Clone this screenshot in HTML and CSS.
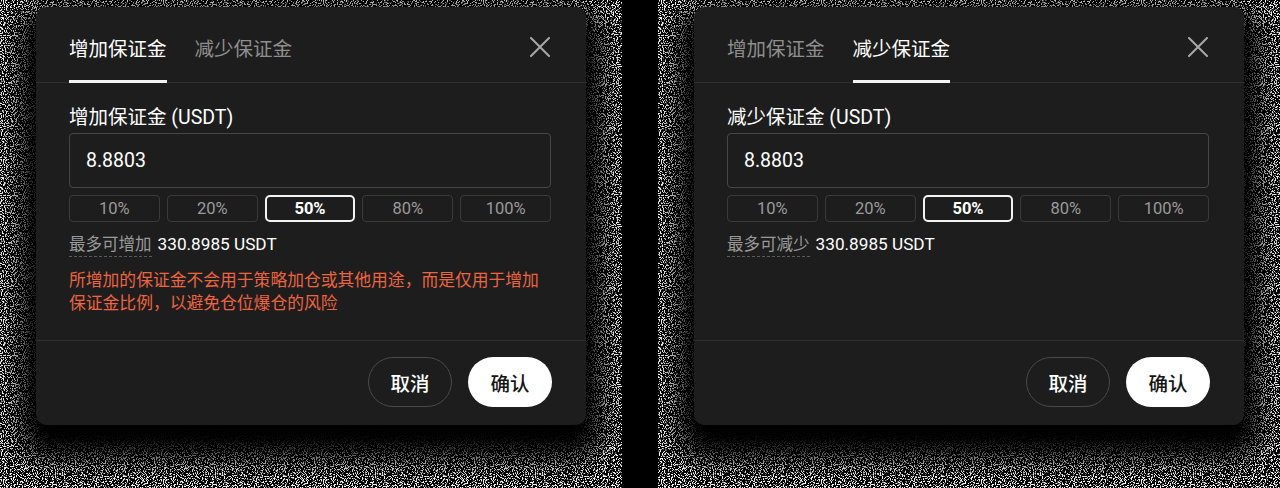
FILE: index.html
```html
<!DOCTYPE html>
<html lang="zh-CN">
<head>
    <meta charset="UTF-8">
    <meta name="viewport" content="width=device-width, initial-scale=1.0">
    <title>调整保证金</title>
    <link rel="stylesheet" href="styles.css">
</head>
<body>
    <!-- Add margin -->
    <div class="shot">
        <div class="modal">
            <div class="modal-head">
                <div class="tabs">
                    <span class="tab active">增加保证金</span>
                    <span class="tab">减少保证金</span>
                </div>
                <span class="close">
                    <svg width="22" height="20" viewBox="0 0 22 20"><path d="M2 1 L20 19 M20 1 L2 19" stroke="#a8a8a8" stroke-width="2" stroke-linecap="round"/></svg>
                </span>
            </div>
            <div class="modal-body">
                <div class="field-label">增加保证金 (USDT)</div>
                <div class="amount">8.8803</div>
                <div class="pcts">
                    <span class="pct">10%</span>
                    <span class="pct">20%</span>
                    <span class="pct on">50%</span>
                    <span class="pct">80%</span>
                    <span class="pct">100%</span>
                </div>
                <div class="max"><span class="max-label">最多可增加</span> <span class="max-value">330.8985 USDT</span></div>
                <p class="warn">所增加的保证金不会用于策略加仓或其他用途，而是仅用于增加保证金比例，以避免仓位爆仓的风险</p>
            </div>
            <div class="modal-foot">
                <button class="btn btn-ghost">取消</button>
                <button class="btn btn-primary">确认</button>
            </div>
        </div>
    </div>

    <!-- Reduce margin -->
    <div class="shot">
        <div class="modal">
            <div class="modal-head">
                <div class="tabs">
                    <span class="tab">增加保证金</span>
                    <span class="tab active">减少保证金</span>
                </div>
                <span class="close">
                    <svg width="22" height="20" viewBox="0 0 22 20"><path d="M2 1 L20 19 M20 1 L2 19" stroke="#a8a8a8" stroke-width="2" stroke-linecap="round"/></svg>
                </span>
            </div>
            <div class="modal-body">
                <div class="field-label">减少保证金 (USDT)</div>
                <div class="amount">8.8803</div>
                <div class="pcts">
                    <span class="pct">10%</span>
                    <span class="pct">20%</span>
                    <span class="pct on">50%</span>
                    <span class="pct">80%</span>
                    <span class="pct">100%</span>
                </div>
                <div class="max"><span class="max-label">最多可减少</span> <span class="max-value">330.8985 USDT</span></div>
            </div>
            <div class="modal-foot">
                <button class="btn btn-ghost">取消</button>
                <button class="btn btn-primary">确认</button>
            </div>
        </div>
    </div>
</body>
</html>
```

FILE: styles.css
```css
body {
    margin: 0;
    height: 488px;
    overflow: hidden;
    display: flex;
    gap: 36px;
    background: #000;
    font-family: Roboto, "Noto Sans CJK SC", sans-serif;
    color: #fff;
}

/* grainy backdrop around each dialog */
.shot {
    flex: none;
    width: 622px;
    height: 488px;
    box-sizing: border-box;
    padding: 7px 36px 0;
    background-color: #000;
    background-image: url("data:image/svg+xml,%3Csvg xmlns='http://www.w3.org/2000/svg' width='160' height='160'%3E%3Cfilter id='n'%3E%3CfeTurbulence type='fractalNoise' baseFrequency='0.9' numOctaves='2' stitchTiles='stitch'/%3E%3CfeColorMatrix values='0 0 0 0 1 0 0 0 0 1 0 0 0 0 1 0 0 0 12 -6.2'/%3E%3C/filter%3E%3Crect width='160' height='160' filter='url(%23n)'/%3E%3C/svg%3E");
}

.modal {
    width: 550px;
    height: 418px;
    background: #1d1d1d;
    border-radius: 10px;
    box-shadow: 0 18px 26px 16px #000;
    display: flex;
    flex-direction: column;
}

.modal-head {
    height: 76px;
    box-sizing: border-box;
    display: flex;
    justify-content: space-between;
    padding: 0 35px 0 33px;
    border-bottom: 1px solid #2f2f2f;
}

.tabs {
    display: flex;
    align-items: flex-end;
    gap: 28px;
}

.tab {
    font-size: 19.5px;
    line-height: 28px;
    padding-bottom: 16px;
    margin-bottom: -1px;
    border-bottom: 3px solid transparent;
    color: #8e8e8e;
}

.tab.active {
    color: #fff;
    border-bottom-color: #f4f4f4;
}

.close {
    margin-top: 30px;
    height: 20px;
}

.modal-body {
    flex: 1;
    padding: 21px 35px 0 33px;
}

.field-label {
    font-size: 19.5px;
    line-height: 28px;
}

.amount {
    margin-top: 1px;
    height: 55px;
    box-sizing: border-box;
    padding: 0 16px;
    display: flex;
    align-items: center;
    border: 1px solid #464646;
    border-radius: 4px;
    font-size: 19.5px;
}

.pcts {
    display: grid;
    grid-template-columns: repeat(5, 1fr);
    gap: 7px;
    margin-top: 7px;
}

.pct {
    height: 27px;
    box-sizing: border-box;
    display: flex;
    align-items: center;
    justify-content: center;
    border: 1px solid #3a3a3a;
    border-radius: 4px;
    font-size: 16.5px;
    color: #9a9a9a;
}

.pct.on {
    border: 2px solid #f2f2f2;
    border-radius: 5px;
    color: #fff;
    font-weight: 700;
}

.max {
    margin-top: 10px;
    font-size: 16.5px;
    line-height: 24px;
}

.max-label {
    display: inline-block;
    line-height: 22px;
    color: #9a9a9a;
    border-bottom: 1px dashed #5c5c5c;
    margin-right: 2px;
}

.max-value {
    font-size: 17.2px;
}

.warn {
    margin: 12px 0 0;
    font-size: 16.8px;
    line-height: 23px;
    color: #ec6440;
}

.modal-foot {
    display: flex;
    justify-content: flex-end;
    gap: 16px;
    padding: 16px 34px 18px;
    border-top: 1px solid #2f2f2f;
}

.btn {
    width: 84px;
    height: 50px;
    border-radius: 25px;
    font: 500 19.5px Roboto, "Noto Sans CJK SC", sans-serif;
    cursor: pointer;
}

.btn-ghost {
    background: transparent;
    border: 1px solid #4a4a4a;
    color: #fff;
}

.btn-primary {
    background: #fff;
    border: 0;
    color: #141414;
}
```
